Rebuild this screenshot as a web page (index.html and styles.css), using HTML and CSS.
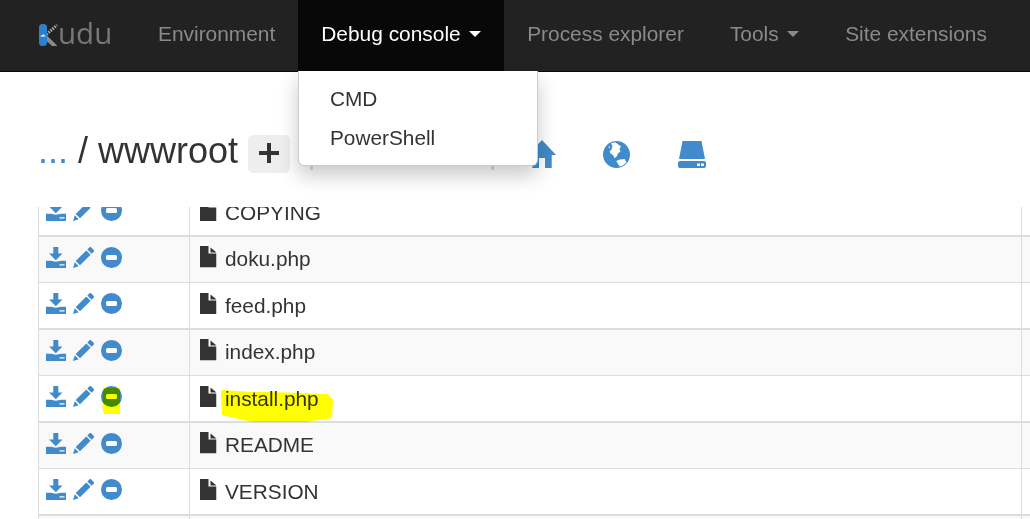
FILE: index.html
```html
<!DOCTYPE html>
<html lang="en">
<head>
<meta charset="utf-8">
<title>Kudu</title>
<link rel="stylesheet" href="styles.css">
</head>
<body>
<svg class="defs" width="0" height="0" aria-hidden="true">
  <symbol id="i-download" viewBox="0 0 20 21">
    <path d="M7.300 0h5v6.500h4.200L9.800 13.200 3.100 6.500h4.200z"/>
    <path fill-rule="evenodd" d="M0 13.800h4.800l5 1 5.400-1H20V21H0zM13.500 17.300v1.200h5v-1.200z"/>
  </symbol>
  <symbol id="i-pencil" viewBox="0 0 21 21">
    <path d="M16.300 0.400a1.400 1.400 0 0 1 2 0l2.300 2.300a1.400 1.400 0 0 1 0 2l-2 2-4.300-4.300zM13.300 3.400l4.300 4.300L7 18.300 2.700 14zM1.800 15.200l4 4L0 21z"/>
  </symbol>
  <symbol id="i-minus" viewBox="0 0 21 21">
    <path fill-rule="evenodd" d="M10.500 0a10.500 10.500 0 1 1 0 21a10.500 10.500 0 1 1 0-21zM6.500 8a1.500 1.500 0 0 0-1.500 1.500v2a1.500 1.500 0 0 0 1.500 1.500h8a1.500 1.500 0 0 0 1.500-1.500v-2a1.500 1.500 0 0 0-1.500-1.500z"/>
  </symbol>
  <symbol id="i-file" viewBox="0 0 16.500 21.500">
    <path d="M0 0h8.500v7.500h8v14H0zM10.500 1.500l6 5h-6z"/>
  </symbol>
</svg>

<nav class="navbar">
  <a class="brand" href="#">
    <svg class="brand-mark" viewBox="0 0 19 24" width="19" height="24" aria-hidden="true">
      <path d="M8 12.500L18.500 23h-5.500L6 16.500z" fill="#8c8c8c"/>
      <path d="M7.500 11.500L18 2" stroke="#b0b0b0" stroke-width="3" stroke-dasharray="1.500 1.200" fill="none"/>
      <rect x="0" y="1" width="8" height="22" rx="3.500" fill="#2f80cc"/>
      <path d="M1.500 13.500c0-1 1-1.300 1.500-1 .4-1.200 2-1.200 2.400 0 .8 0 1.200.4 1.200 1z" fill="#fff"/>
    </svg>
    <span class="brand-text">udu</span>
  </a>
  <a class="nav-item" href="#">Environment</a>
  <a class="nav-item is-active" href="#">Debug console<span class="caret"></span></a>
  <a class="nav-item" href="#">Process explorer</a>
  <a class="nav-item" href="#">Tools<span class="caret"></span></a>
  <a class="nav-item" href="#">Site extensions</a>
</nav>

<ul class="dropdown">
  <li>CMD</li>
  <li>PowerShell</li>
</ul>

<main class="content">
  <div class="toolbar">
    <h3 class="crumbs"><a href="#">...</a> / wwwroot</h3>
    <button class="add-btn" type="button" aria-label="Add">
      <svg viewBox="0 0 20 20" width="20" height="20"><path d="M8 0h4v8h8v4h-8v8H8v-8H0V8h8z"/></svg>
    </button>
    <span class="sep sep-first"></span>
    <span class="sep sep-second"></span>
    <svg class="tool tool-home" viewBox="0 0 28 28" width="28" height="28" aria-hidden="true">
      <path d="M14 0L28 15h-4.300v13H17V18h-6v10H4.300V15H0z"/>
    </svg>
    <svg class="tool tool-globe" viewBox="0 0 27 27" width="27" height="27" aria-hidden="true">
      <circle cx="13.500" cy="13.500" r="13.500"/>
      <path fill="#fff" d="M8 2.300L12.300 1.300 18 5.600 16.500 8 17.500 10.500 15 12.500 14 15 11.700 17.300 10 14 7.500 12.500 6.700 10.600 8.500 8.500 9.500 5z"/>
      <path fill="#fff" d="M13.300 20L17 18.500 21.700 18 23.500 21.500 19 25 16.700 25.600 15 23z"/>
      <path fill="#fff" d="M5.500 6.500L7 4.500 6.500 7.500z"/>
    </svg>
    <svg class="tool tool-hdd" viewBox="0 0 28 27" width="28" height="27" aria-hidden="true">
      <path d="M4.500 0h19L27 18H1z"/>
      <path fill-rule="evenodd" d="M2 20h24a2 2 0 0 1 2 2v3a2 2 0 0 1-2 2H2a2 2 0 0 1-2-2v-3a2 2 0 0 1 2-2zM19 22.500v2.500h3v-2.500zM23 22.500v2.500h3v-2.500z"/>
    </svg>
  </div>

  <div class="file-wrap">
    <div class="file-table">
      <div class="row odd"><div class="cell-actions"><svg class="ic ic-dl"><use href="#i-download"/></svg><svg class="ic ic-pen"><use href="#i-pencil"/></svg><svg class="ic ic-min"><use href="#i-minus"/></svg></div><div class="cell-name"><svg class="ic-file"><use href="#i-file"/></svg>COPYING</div><div class="cell-rest"></div></div>
      <div class="row even"><div class="cell-actions"><svg class="ic ic-dl"><use href="#i-download"/></svg><svg class="ic ic-pen"><use href="#i-pencil"/></svg><svg class="ic ic-min"><use href="#i-minus"/></svg></div><div class="cell-name"><svg class="ic-file"><use href="#i-file"/></svg>doku.php</div><div class="cell-rest"></div></div>
      <div class="row odd"><div class="cell-actions"><svg class="ic ic-dl"><use href="#i-download"/></svg><svg class="ic ic-pen"><use href="#i-pencil"/></svg><svg class="ic ic-min"><use href="#i-minus"/></svg></div><div class="cell-name"><svg class="ic-file"><use href="#i-file"/></svg>feed.php</div><div class="cell-rest"></div></div>
      <div class="row even"><div class="cell-actions"><svg class="ic ic-dl"><use href="#i-download"/></svg><svg class="ic ic-pen"><use href="#i-pencil"/></svg><svg class="ic ic-min"><use href="#i-minus"/></svg></div><div class="cell-name"><svg class="ic-file"><use href="#i-file"/></svg>index.php</div><div class="cell-rest"></div></div>
      <div class="row odd"><div class="cell-actions"><svg class="ic ic-dl"><use href="#i-download"/></svg><svg class="ic ic-pen"><use href="#i-pencil"/></svg><svg class="ic ic-min"><use href="#i-minus"/></svg></div><div class="cell-name"><svg class="ic-file"><use href="#i-file"/></svg>install.php</div><div class="cell-rest"></div></div>
      <div class="row even"><div class="cell-actions"><svg class="ic ic-dl"><use href="#i-download"/></svg><svg class="ic ic-pen"><use href="#i-pencil"/></svg><svg class="ic ic-min"><use href="#i-minus"/></svg></div><div class="cell-name"><svg class="ic-file"><use href="#i-file"/></svg>README</div><div class="cell-rest"></div></div>
      <div class="row odd"><div class="cell-actions"><svg class="ic ic-dl"><use href="#i-download"/></svg><svg class="ic ic-pen"><use href="#i-pencil"/></svg><svg class="ic ic-min"><use href="#i-minus"/></svg></div><div class="cell-name"><svg class="ic-file"><use href="#i-file"/></svg>VERSION</div><div class="cell-rest"></div></div>
      <div class="row even"><div class="cell-actions"></div><div class="cell-name"></div><div class="cell-rest"></div></div>
    </div>
  </div>
</main>

<svg class="marker" viewBox="0 0 1030 519" width="1030" height="519" aria-hidden="true">
  <path d="M221 390L248 391.700 295 392.700 328 394 333 400 332 418 305 422 252 422 222 415z"/>
  <path d="M103 388L120 388 120 414 104 414 102.500 408z"/>
</svg>
</body>
</html>
```
FILE: styles.css
```css
html, body {
  margin: 0;
  padding: 0;
  width: 1030px;
  height: 519px;
  overflow: hidden;
  background: #fff;
  font-family: "Liberation Sans", Arial, sans-serif;
  color: #333;
}

.defs {
  display: block;
  height: 0;
}

/* Navbar */
.navbar {
  display: flex;
  align-items: stretch;
  height: 71px;
  background: #222;
  border-bottom: 1px solid #080808;
  font-size: 20.9px;
}

.brand {
  display: flex;
  align-items: center;
  width: 135px;
  padding-left: 39px;
  padding-bottom: 2px;
  box-sizing: border-box;
  text-decoration: none;
}

.brand-mark {
  flex: none;
}

.brand-text {
  font-family: "Open Sans", sans-serif;
  font-weight: 400;
  font-size: 29.5px;
  line-height: 1;
  color: #777;
  position: relative;
  top: -2px;
}

.nav-item {
  display: flex;
  align-items: center;
  padding: 0 23px;
  color: #8a8a8a;
  text-decoration: none;
  position: relative;
  top: -2px;
}

.nav-item.is-active {
  color: #fff;
  background: #080808;
  top: 0;
  padding-bottom: 4px;
  box-sizing: border-box;
  margin-bottom: -1px;
}

.caret {
  width: 0;
  height: 0;
  margin-left: 8.5px;
  border-top: 6px solid currentColor;
  border-left: 6px solid transparent;
  border-right: 6px solid transparent;
}

/* Dropdown */
.dropdown {
  position: absolute;
  left: 298px;
  top: 71px;
  width: 240px;
  height: 95px;
  box-sizing: border-box;
  margin: 0;
  padding: 8px 0 0;
  list-style: none;
  background: #fff;
  border: 1px solid rgba(0, 0, 0, 0.2);
  border-top: 0;
  border-radius: 0 0 6px 6px;
  box-shadow: 0 9px 20px rgba(0, 0, 0, 0.22);
  font-size: 20.8px;
  z-index: 5;
}

.dropdown li {
  height: 39px;
  line-height: 39px;
  padding-left: 31px;
}

/* Content */
.content {
  padding-left: 38px;
}

.toolbar {
  display: flex;
  align-items: flex-start;
  height: 135px;
  box-sizing: border-box;
  padding-top: 57px;
}

.crumbs {
  margin: 0;
  font-weight: 400;
  font-size: 36px;
  line-height: 44px;
  white-space: nowrap;
}

.crumbs a {
  color: #428bca;
  text-decoration: none;
}

.add-btn {
  width: 42px;
  height: 38px;
  margin: 6px 0 0 10px;
  padding: 0 0 2px;
  border: 0;
  border-radius: 5px;
  background: #eee;
  display: flex;
  align-items: center;
  justify-content: center;
}

.add-btn svg {
  fill: #333;
}

.sep {
  flex: none;
  width: 3px;
  height: 14px;
  margin-top: 27px;
  background: #ddd;
}

.sep-first {
  margin-left: 20px;
}

.sep-second {
  margin-left: 178px;
}

.tool {
  flex: none;
  fill: #428bca;
  margin-top: 12px;
}

.tool-home {
  margin-left: 34px;
  margin-top: 11px;
}

.tool-globe {
  margin-left: 47px;
}

.tool-hdd {
  margin-left: 48px;
}

/* File table */
.file-wrap {
  height: 312px;
  overflow: hidden;
}

.file-table {
  margin-top: -16.75px;
  width: 1100px;
}

.row {
  display: flex;
  height: 46.5px;
  box-sizing: border-box;
  font-size: 20.8px;
}

.row.odd {
  border-bottom: 2px solid #ddd;
}

.row.even {
  background: #f9f9f9;
  border-bottom: 1px solid #ddd;
}

.cell-actions {
  flex: none;
  display: flex;
  align-items: flex-start;
  width: 152px;
  box-sizing: border-box;
  padding: 9.75px 0 0 7px;
  border-left: 1px solid #ddd;
  border-right: 1px solid #ddd;
  fill: #428bca;
}

.ic {
  display: block;
  flex: none;
}

.ic-dl {
  width: 20px;
  height: 21px;
}

.ic-pen {
  width: 21px;
  height: 21px;
  margin-left: 7px;
}

.ic-min {
  width: 21px;
  height: 21px;
  margin-left: 7px;
}

.cell-name {
  flex: none;
  display: flex;
  align-items: flex-start;
  width: 832px;
  box-sizing: border-box;
  padding: 9.25px 0 0 10px;
  line-height: 25px;
  fill: #333;
  border-right: 1px solid #ddd;
}

.ic-file {
  flex: none;
  width: 16.5px;
  height: 21.5px;
  margin-right: 8.5px;
}

.cell-rest {
  flex: 1;
}

/* Highlighter marks laid over the content */
.marker {
  position: absolute;
  left: 0;
  top: 0;
  fill: #ffff00;
  mix-blend-mode: multiply;
  pointer-events: none;
  z-index: 6;
}
```
